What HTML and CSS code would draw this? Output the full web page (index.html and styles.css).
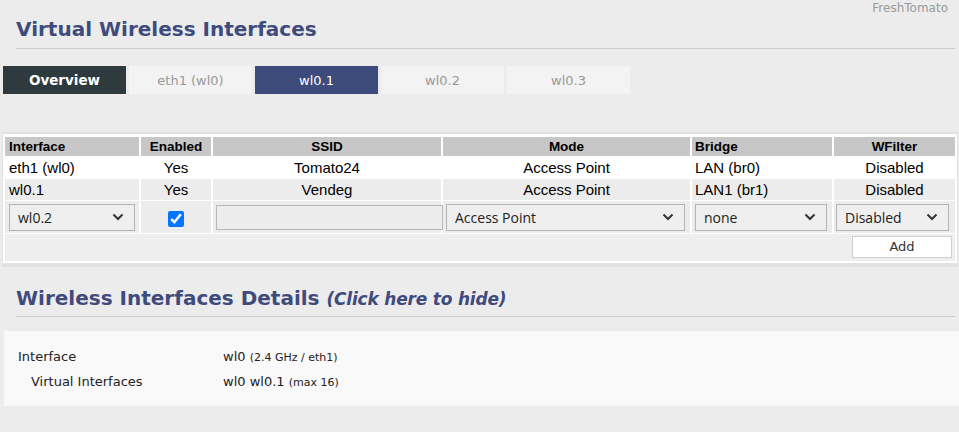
FILE: index.html
```html
<!DOCTYPE html>
<html>
<head>
<meta charset="utf-8">
<title>Virtual Wireless Interfaces</title>
<link rel="stylesheet" href="styles.css">
</head>
<body>
<div class="topbar"><span class="brand">FreshTomato</span></div>
<h1 class="section-title">Virtual Wireless Interfaces</h1>
<div class="tabs">
  <a class="tab tab-overview">Overview</a>
  <a class="tab">eth1 (wl0)</a>
  <a class="tab tab-active">wl0.1</a>
  <a class="tab">wl0.2</a>
  <a class="tab">wl0.3</a>
</div>
<div class="panel">
  <table class="grid">
    <colgroup>
      <col class="c1"><col class="c2"><col class="c3"><col class="c4"><col class="c5"><col>
    </colgroup>
    <tr class="head">
      <th class="left">Interface</th>
      <th>Enabled</th>
      <th>SSID</th>
      <th>Mode</th>
      <th class="left">Bridge</th>
      <th>WFilter</th>
    </tr>
    <tr class="row odd">
      <td class="left">eth1 (wl0)</td>
      <td>Yes</td>
      <td>Tomato24</td>
      <td>Access Point</td>
      <td class="left">LAN (br0)</td>
      <td>Disabled</td>
    </tr>
    <tr class="row even">
      <td class="left">wl0.1</td>
      <td>Yes</td>
      <td>Vendeg</td>
      <td>Access Point</td>
      <td class="left">LAN1 (br1)</td>
      <td>Disabled</td>
    </tr>
    <tr class="row edit">
      <td class="left"><select class="sel sel-if"><option>wl0.2</option></select></td>
      <td><input class="chk" type="checkbox" checked></td>
      <td class="left"><input class="txt" type="text"></td>
      <td class="left"><select class="sel sel-mode"><option>Access Point</option></select></td>
      <td class="left"><select class="sel sel-br"><option>none</option></select></td>
      <td class="left"><select class="sel sel-wf"><option>Disabled</option></select></td>
    </tr>
    <tr class="row foot">
      <td class="right" colspan="6"><button class="btn">Add</button></td>
    </tr>
  </table>
</div>
<h2 class="section-title">Wireless Interfaces Details <i class="hint">(Click here to hide)</i></h2>
<div class="details">
  <div class="drow"><span class="dlabel">Interface</span><span class="dval">wl0 <small>(2.4 GHz / eth1)</small></span></div>
  <div class="drow"><span class="dlabel indent">Virtual Interfaces</span><span class="dval">wl0 wl0.1 <small>(max 16)</small></span></div>
</div>
</body>
</html>
```

FILE: styles.css
```css
html, body {
  margin: 0;
  padding: 0;
}
body {
  background: #ececec;
  font-family: "DejaVu Sans", sans-serif;
  color: #222;
  width: 959px;
  height: 432px;
  overflow: hidden;
}
.topbar {
  display: flex;
  justify-content: flex-end;
  height: 14px;
  padding-right: 11px;
  padding-top: 1px;
  font-size: 12px;
  line-height: 14px;
}
.brand {
  color: #999;
}
.section-title {
  margin: 2px 4px 0 16px;
  padding: 0 0 7px 0;
  font-size: 20px;
  line-height: 24px;
  font-weight: bold;
  color: #3f4b7c;
  border-bottom: 1px solid #cacaca;
}
.hint {
  font-style: italic;
  font-size: 17px;
  letter-spacing: -0.2px;
}
.tabs {
  display: flex;
  gap: 3px;
  margin: 17px 0 0 3px;
}
.tab {
  width: 123px;
  height: 28px;
  display: flex;
  align-items: center;
  justify-content: center;
  background: #f3f3f3;
  color: #999;
  font-size: 13px;
}
.tab-overview {
  background: #2e3a3d;
  color: #fff;
  font-weight: bold;
  font-size: 13.5px;
}
.tab-active {
  background: #3e4c7c;
  color: #fff;
}
.panel {
  margin: 38px 1px 0 2px;
  border: 1px solid #e2e2e2;
  border-top-width: 2px;
  border-bottom-width: 4px;
  padding: 2px 0 1px 0;
  background: #fff;
}
.grid {
  width: 100%;
  table-layout: fixed;
  border-collapse: separate;
  border-spacing: 2px 1px;
  font-family: "Liberation Sans", Arial, sans-serif;
  color: #000;
}
.c1 { width: 134px; }
.c2 { width: 70px; }
.c3 { width: 228px; }
.c4 { width: 247px; }
.c5 { width: 140px; }
.grid th, .grid td {
  padding: 0 3px;
  text-align: center;
  white-space: nowrap;
}
.grid th {
  background: #c7c7c7;
  font-size: 13.5px;
  font-weight: bold;
  height: 19px;
  line-height: 19px;
}
.grid th.left, .grid td.left {
  text-align: left;
}
.grid th.left:first-child, .grid td.left:first-child {
  padding-left: 4px;
}
.grid td {
  font-size: 15px;
  line-height: 21px;
}
.odd td { background: #fff; height: 21px; }
.even td { background: #ececec; height: 21px; }
.edit td { background: #ececec; height: 32px; padding: 0; }
.edit td.left:first-child { padding-left: 4px; }
.foot td { background: #eeeeee; height: 27px; }
.grid td.right {
  text-align: right;
  padding-right: 3px;
}
.sel {
  appearance: none;
  -webkit-appearance: none;
  display: block;
  height: 27px;
  margin: 0;
  padding: 0 24px 0 8px;
  border: 1px solid #b4b4b4;
  border-radius: 0;
  background-color: #efefef;
  background-image: url("data:image/svg+xml;utf8,<svg xmlns='http://www.w3.org/2000/svg' width='12' height='8' viewBox='0 0 12 8'><path d='M1.5 1.5 L6 6 L10.5 1.5' fill='none' stroke='%23333' stroke-width='2'/></svg>");
  background-repeat: no-repeat;
  background-position: right 10px center;
  font-family: "Open Sans", sans-serif;
  font-size: 14px;
  color: #222;
}
.sel-if { width: 126px; }
.sel-mode { width: 239px; margin-left: 3px; }
.sel-br { width: 132px; margin-left: 3px; }
.sel-wf { width: 113px; margin-left: 2px; }
.chk {
  width: 16px;
  height: 16px;
  margin: 0;
  vertical-align: middle;
  accent-color: #0075ff;
}
.txt {
  display: block;
  width: 227px;
  height: 25px;
  box-sizing: border-box;
  margin: 0 0 0 3px;
  border: 1px solid #b8b8b8;
  background: #ececec;
  padding: 0 4px;
}
.btn {
  width: 100px;
  height: 22px;
  margin: 0 0 2px 0;
  padding: 0;
  border: 1px solid #cfcfcf;
  background: #fff;
  font-family: "DejaVu Sans", sans-serif;
  font-size: 13px;
  color: #333;
  vertical-align: middle;
}
h2.section-title {
  margin-top: 19px;
  padding-bottom: 5px;
}
.details {
  margin: 14px 0 0 4px;
  background: #f9f9f9;
  padding: 14px 0 11px 14px;
  font-size: 13px;
  line-height: 24px;
}
.drow {
  display: flex;
}
.dlabel {
  width: 205px;
}
.dlabel.indent {
  padding-left: 13px;
  width: 192px;
}
.dval small {
  font-size: 11px;
}
```
